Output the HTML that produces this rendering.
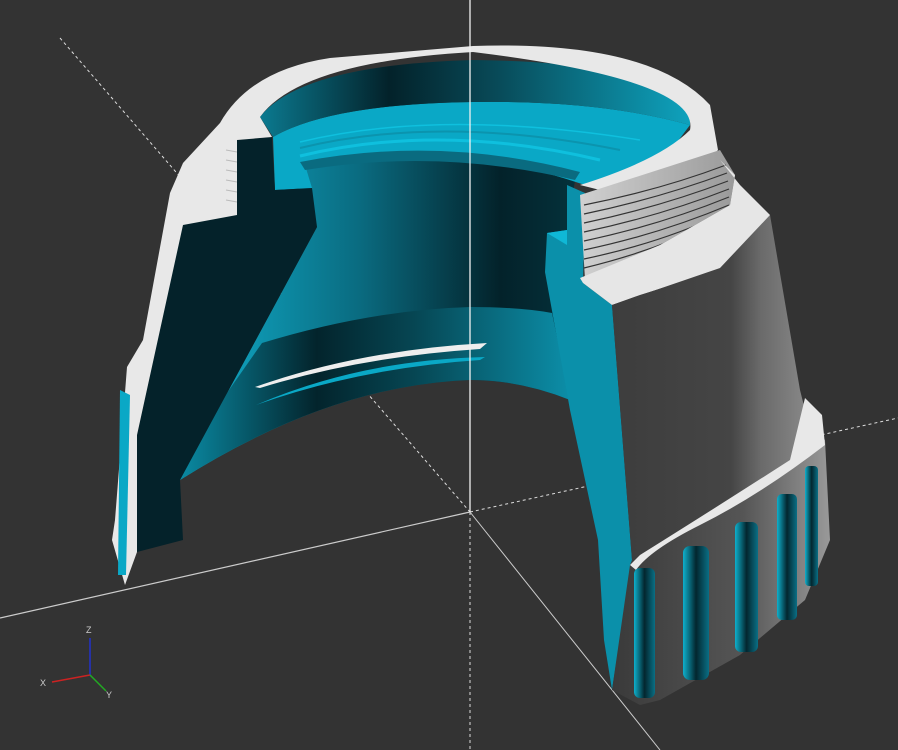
<!DOCTYPE html>
<html><head><style>html,body{margin:0;padding:0;background:#333}svg{display:block}</style></head>
<body>
<svg width="898" height="750" viewBox="0 0 898 750" xmlns="http://www.w3.org/2000/svg">
<defs>
<linearGradient id="tin" x1="0" x2="1" y1="0" y2="0">
<stop offset="0" stop-color="#0b7a90"/><stop offset="0.3" stop-color="#03222a"/><stop offset="0.55" stop-color="#084a58"/><stop offset="1" stop-color="#0ea2bd"/></linearGradient>
<linearGradient id="cone" x1="0" x2="1" y1="0" y2="0">
<stop offset="0" stop-color="#10b2d0"/><stop offset="0.45" stop-color="#0a6b80"/><stop offset="0.8" stop-color="#03222a"/><stop offset="1" stop-color="#05323c"/></linearGradient>
<linearGradient id="band" x1="0" x2="1" y1="0" y2="0">
<stop offset="0" stop-color="#0a8aa3"/><stop offset="0.35" stop-color="#03242c"/><stop offset="0.6" stop-color="#064653"/><stop offset="1" stop-color="#0c8ea8"/></linearGradient>
<linearGradient id="gray" x1="0" x2="1" y1="0" y2="0">
<stop offset="0" stop-color="#3d3d3d"/><stop offset="0.6" stop-color="#454545"/><stop offset="0.75" stop-color="#6a6a6a"/><stop offset="1" stop-color="#8a8a8a"/></linearGradient>
<linearGradient id="knurl" x1="0" x2="1" y1="0" y2="0">
<stop offset="0" stop-color="#3a3a3a"/><stop offset="0.6" stop-color="#555"/><stop offset="1" stop-color="#999"/></linearGradient>
<linearGradient id="thr" x1="0" x2="1"><stop offset="0" stop-color="#d0d0d0"/><stop offset="1" stop-color="#9a9a9a"/></linearGradient>
<linearGradient id="flute" x1="0" x2="1"><stop offset="0" stop-color="#0fb0cc"/><stop offset="0.5" stop-color="#03262e"/><stop offset="1" stop-color="#0a6f85"/></linearGradient>
</defs>
<rect width="898" height="750" fill="#333"/>
<!-- axes -->
<line x1="60" y1="38" x2="470" y2="512" stroke="#ddd" stroke-width="1" stroke-dasharray="3,3"/>
<line x1="470" y1="512" x2="898" y2="418" stroke="#ddd" stroke-width="1" stroke-dasharray="3,3"/>
<line x1="470" y1="512" x2="470" y2="750" stroke="#ddd" stroke-width="1" stroke-dasharray="3,3"/>
<line x1="0" y1="618" x2="470" y2="512" stroke="#ccc" stroke-width="1.2"/>
<line x1="470" y1="512" x2="660" y2="750" stroke="#ccc" stroke-width="1"/>
<!-- cone + inner dark wall (full middle) -->
<path d="M280 150 L580 150 L567 230 L545 272 L570 400 Q520 380 470 380 Q330 385 180 480 L317 227 Z" fill="url(#cone)"/>
<!-- band -->
<path d="M262 343 Q370 310 470 307 Q520 307 552 313 L570 400 Q520 380 470 380 Q330 385 180 480 L215 410 Z" fill="url(#band)"/>
<path d="M255 387 Q360 350 487 343 L480 349 Q360 357 260 388 Z" fill="#eee"/>
<path d="M256 405 Q360 360 485 357 L480 360 Q360 368 256 405 Z" fill="#0aa8c6"/>
<!-- neck / light teal rings -->
<path d="M273 137 Q330 104 473 102 Q600 100 690 125 L660 165 L585 185 Q440 135 305 165 L312 188 L275 190 Z" fill="#0aa8c6"/>
<path d="M300 162 Q440 135 580 172 L575 180 Q440 148 305 170 Z" fill="#0a6b80"/>
<path d="M300 156 Q440 122 600 160" fill="none" stroke="#0fc0de" stroke-width="3"/>
<path d="M300 148 Q440 114 620 150" fill="none" stroke="#0b94ae" stroke-width="2"/>
<path d="M300 142 Q440 108 640 140" fill="none" stroke="#0fc0de" stroke-width="1.5"/>
<!-- inner wall top -->
<path d="M260 117 Q300 65 473 60 Q660 62 690 110 L690 125 Q600 100 473 102 Q330 104 273 137 Z" fill="url(#tin)"/>
<!-- dark cut face left -->
<path d="M237 140 L272 137 L275 190 L312 188 L317 227 L180 480 L183 540 L137 552 L137 435 L183 223 L233 215 Z" fill="#04222a"/>
<!-- white cut face left -->
<path d="M220 123 Q250 70 330 58 L473 46 L473 52 Q300 62 260 117 L272 137 L237 140 L237 215 L183 225 L137 435 L137 552 L125 585 L112 540 L115 520 L127 367 L143 340 L170 193 L183 163 Z" fill="#e8e8e8"/>
<path d="M226 150 L237 152 M226 160 L237 162 M226 170 L237 172 M226 180 L237 182 M226 190 L237 192 M226 200 L237 202" stroke="#bbb" stroke-width="1"/>
<path d="M120 390 L130 395 L126 575 L118 575 Z" fill="#0aa8c6"/>
<!-- top ring right -->
<path d="M473 46 Q650 40 710 105 L718 150 Q700 170 600 190 L580 185 Q660 160 690 130 Q700 80 473 52 Z" fill="#e8e8e8"/>
<!-- right cut face teal -->
<path d="M567 185 L585 193 L583 283 L612 305 L632 560 L612 690 L604 640 L598 540 L570 410 L545 272 L547 233 L567 230 Z" fill="#0b90aa"/>
<path d="M547 233 L567 230 L567 245 Z" fill="#0fb8d6"/>
<!-- threads right -->
<path d="M580 195 L720 150 L735 175 L730 205 L660 245 L585 280 Z" fill="url(#thr)"/>
<g stroke="#333" stroke-width="1.2" fill="none">
<path d="M584 205 Q660 190 726 165"/><path d="M584 214 Q660 198 727 173"/><path d="M584 223 Q660 207 728 181"/><path d="M584 232 Q660 216 729 189"/><path d="M584 241 Q660 225 729 197"/><path d="M584 250 Q660 234 729 205"/><path d="M584 259 Q660 243 720 215"/><path d="M584 268 Q650 252 700 228"/>
</g>
<!-- white hex flange -->
<path d="M720 160 L740 185 L770 215 L755 250 L720 270 L640 295 L612 305 L583 283 L580 278 L660 245 L730 205 L735 175 Z" fill="#e6e6e6"/>
<!-- gray body -->
<path d="M612 305 L720 268 L770 215 L800 390 L810 430 L790 465 L720 505 L640 560 L632 560 Z" fill="url(#gray)"/>
<!-- knurl band -->
<path d="M632 560 L720 510 L790 465 L815 430 L825 440 L830 540 L805 600 L740 655 L660 700 L640 705 L612 690 L630 565 Z" fill="url(#knurl)"/>
<path d="M630 565 L640 555 Q720 505 790 460 L805 398 L822 415 L825 445 Q760 495 700 525 Q650 550 636 570 Z" fill="#e8e8e8"/>
<!-- flutes -->
<g fill="url(#flute)">
<rect x="634" y="568" width="21" height="130" rx="6"/>
<rect x="683" y="546" width="26" height="134" rx="7"/>
<rect x="735" y="522" width="23" height="130" rx="6"/>
<rect x="777" y="494" width="20" height="126" rx="5"/>
<rect x="805" y="466" width="13" height="120" rx="4"/>
</g>
<!-- vertical axis -->
<line x1="470" y1="0" x2="470" y2="512" stroke="#f2f2f2" stroke-width="1.3"/>
<!-- axis gizmo -->
<line x1="90" y1="638" x2="90" y2="675" stroke="#2233cc" stroke-width="1.5"/>
<line x1="90" y1="675" x2="52" y2="682" stroke="#cc2222" stroke-width="1.5"/>
<line x1="90" y1="675" x2="106" y2="691" stroke="#22aa22" stroke-width="1.5"/>
<text x="86" y="633" font-family="Liberation Sans, sans-serif" font-size="9" fill="#ccc">Z</text>
<text x="40" y="686" font-family="Liberation Sans, sans-serif" font-size="9" fill="#ccc">X</text>
<text x="106" y="698" font-family="Liberation Sans, sans-serif" font-size="9" fill="#ccc">Y</text>
</svg>
</body></html>
